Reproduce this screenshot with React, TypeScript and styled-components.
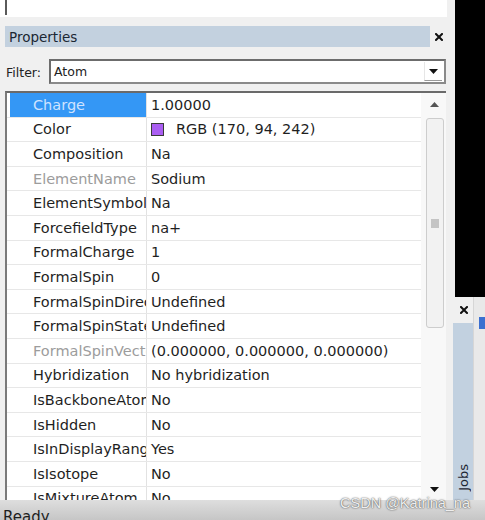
import React from "react";
import styled, { createGlobalStyle } from "styled-components";

const Global = createGlobalStyle`
  html, body { margin: 0; padding: 0; background: #f0f0f0; }
  body { font-family: "DejaVu Sans", Verdana, sans-serif; }
  * { box-sizing: border-box; }
`;

const Root = styled.div`
  position: relative;
  width: 485px;
  height: 520px;
  overflow: hidden;
  display: flex;
  flex-direction: column;
  background: #f0f0f0;
`;

const Main = styled.div`
  height: 500px;
  display: flex;
  flex-direction: row;
`;

const LeftPane = styled.div`
  width: 453px;
  display: flex;
  flex-direction: column;
`;

const TopWhite = styled.div`
  height: 17px;
  width: 447px;
  background: #ffffff;
  padding-left: 5px;
`;

const TopWhiteEdge = styled.div`
  width: 2px;
  height: 15px;
  background: #5a5a5a;
`;

const HeaderRow = styled.div`
  margin-top: 9px;
  margin-left: 5px;
  width: 443px;
  height: 21px;
  display: flex;
  align-items: center;
`;

const HeaderBar = styled.div`
  flex: 1;
  height: 100%;
  background: #c3d1df;
  display: flex;
  align-items: center;
  padding-left: 4px;
  font-size: 13.5px;
  color: #1b2733;
`;

const CloseBtn = styled.div`
  width: 18px;
  height: 100%;
  display: flex;
  align-items: center;
  justify-content: center;
`;

const FilterRow = styled.div`
  margin-top: 12px;
  height: 25px;
  display: flex;
  align-items: center;
  padding-left: 6px;
`;

const FilterLabel = styled.div`
  width: 43px;
  font-size: 12.5px;
  color: #222;
  padding-top: 2px;
`;

const Combo = styled.div`
  width: 397px;
  height: 25px;
  background: #fff;
  border-style: solid;
  border-width: 2px;
  border-color: #6c6c6c #8a8a8a #8a8a8a #6c6c6c;
  display: flex;
  align-items: center;
`;

const ComboText = styled.div`
  flex: 1;
  font-size: 12.5px;
  color: #222;
  padding-left: 3px;
`;

const ComboButton = styled.div`
  width: 18px;
  height: 19px;
  margin-right: 2px;
  display: flex;
  align-items: center;
  justify-content: center;
  border-bottom: 1px solid #9a9a9a;
  border-left: 1px solid #e6e6e6;
`;

const Grid = styled.div`
  margin-top: 7px;
  margin-left: 5px;
  width: 441px;
  height: 409px;
  border-top: 2px solid #6a6a6a;
  border-left: 2px solid #7a7a7a;
  background: #fff;
  display: flex;
  overflow: hidden;
`;

const RowsList = styled.div`
  flex: 1;
  display: flex;
  flex-direction: column;
`;

const Row = styled.div`
  flex: 0 0 24.6px;
  height: 24.6px;
  display: grid;
  grid-template-columns: 3px 136px 1px 1fr;
  border-bottom: 1px solid #e7e7e7;
  font-size: 14.5px;
`;

const Gutter = styled.div`
  background: #fff;
`;

const NameCell = styled.div<{ $selected?: boolean; $dim?: boolean }>`
  background: ${(p) => (p.$selected ? "#3497f5" : "#fff")};
  color: ${(p) => (p.$selected ? "#cfe3ff" : p.$dim ? "#9c9c9c" : "#1f1f1f")};
  padding-left: 23px;
  white-space: nowrap;
  overflow: hidden;
  display: flex;
  align-items: center;
`;

const Divider = styled.div`
  background: #e2e2e2;
`;

const ValueCell = styled.div`
  padding-left: 4px;
  color: #1f1f1f;
  white-space: nowrap;
  overflow: hidden;
  display: flex;
  align-items: center;
`;

const Swatch = styled.span<{ $color: string }>`
  width: 13px;
  height: 13px;
  background: ${(p) => p.$color};
  border: 1px solid #3a3a3a;
  margin-right: 12px;
  flex: 0 0 auto;
`;

const Scrollbar = styled.div`
  width: 25px;
  background: #f8f8f8;
  display: flex;
  flex-direction: column;
  align-items: center;
`;

const ScrollBtn = styled.div`
  height: 22px;
  width: 100%;
  display: flex;
  align-items: center;
  justify-content: center;
  padding-left: 2px;
`;

const Thumb = styled.div`
  margin-top: 3px;
  margin-left: 3px;
  width: 18px;
  height: 210px;
  border: 1px solid #cdcdcd;
  border-radius: 3px;
  background: #f2f2f2;
  display: flex;
  align-items: center;
  justify-content: center;
`;

const Grip = styled.div`
  width: 8px;
  height: 9px;
  background: #c4c4c4;
`;

const Spacer = styled.div`
  flex: 1;
`;

const RightStrip = styled.div`
  width: 32px;
  display: flex;
  flex-direction: column;
`;

const BlackBox = styled.div`
  height: 297px;
  margin-left: 2px;
  background: #000;
`;

const DockArea = styled.div`
  flex: 1;
  display: flex;
`;

const JobsCol = styled.div`
  width: 22px;
  display: flex;
  flex-direction: column;
`;

const DockClose = styled.div`
  height: 26px;
  display: flex;
  align-items: center;
  justify-content: center;
  padding-left: 1px;
`;

const JobsTab = styled.div`
  flex: 1;
  background: #c2d1e0;
  display: flex;
  flex-direction: column;
  justify-content: flex-end;
  align-items: center;
  padding-bottom: 9px;
`;

const JobsText = styled.div`
  writing-mode: vertical-rl;
  transform: rotate(180deg);
  font-size: 13px;
  color: #1d2733;
`;

const EdgePanel = styled.div`
  flex: 1;
  background: #e9e9e9;
  border-left: 1px solid #d6d6d6;
  padding-top: 20px;
  padding-left: 5px;
`;

const EdgeMark = styled.div`
  width: 6px;
  height: 12px;
  background: #3b6fd0;
`;

const StatusBar = styled.div`
  height: 20px;
  background: linear-gradient(#dedede, #c6c6c6);
  padding-left: 3px;
  padding-top: 8px;
  font-size: 15px;
  color: #1e1e1e;
  overflow: hidden;
  line-height: 18px;
`;

const Watermark = styled.div`
  position: absolute;
  right: 15px;
  bottom: 9px;
  font-family: "Liberation Sans", Arial, sans-serif;
  font-size: 14.5px;
  color: #eeeeee;
  text-shadow: 0 0 2px rgba(0, 0, 0, 0.5), 0 0 1px rgba(0, 0, 0, 0.5);
  white-space: nowrap;
`;

const XIcon = ({ size = 8 }: { size?: number }) => (
  <svg width={size} height={size} viewBox="0 0 8 8">
    <path d="M1 1L7 7M7 1L1 7" stroke="#111" strokeWidth="2" strokeLinecap="square" />
  </svg>
);

const Tri = ({ down }: { down?: boolean }) => (
  <svg width="9" height="5" viewBox="0 0 9 5">
    <path d={down ? "M0 0H9L4.5 5Z" : "M0 5H9L4.5 0Z"} fill={down ? "#111" : "#555"} />
  </svg>
);

type Prop = { name: string; value: string; selected?: boolean; dim?: boolean; swatch?: string };

const props: Prop[] = [
  { name: "Charge", value: "1.00000", selected: true },
  { name: "Color", value: "RGB (170, 94, 242)", swatch: "#aa5ef2" },
  { name: "Composition", value: "Na" },
  { name: "ElementName", value: "Sodium", dim: true },
  { name: "ElementSymbol", value: "Na" },
  { name: "ForcefieldType", value: "na+" },
  { name: "FormalCharge", value: "1" },
  { name: "FormalSpin", value: "0" },
  { name: "FormalSpinDirection", value: "Undefined" },
  { name: "FormalSpinState", value: "Undefined" },
  { name: "FormalSpinVector", value: "(0.000000, 0.000000, 0.000000)", dim: true },
  { name: "Hybridization", value: "No hybridization" },
  { name: "IsBackboneAtom", value: "No" },
  { name: "IsHidden", value: "No" },
  { name: "IsInDisplayRange", value: "Yes" },
  { name: "IsIsotope", value: "No" },
  { name: "IsMixtureAtom", value: "No" },
];

export default function App() {
  return (
    <Root>
      <Global />
      <Main>
        <LeftPane>
          <TopWhite>
            <TopWhiteEdge />
          </TopWhite>
          <HeaderRow>
            <HeaderBar>Properties</HeaderBar>
            <CloseBtn>
              <XIcon />
            </CloseBtn>
          </HeaderRow>
          <FilterRow>
            <FilterLabel>Filter:</FilterLabel>
            <Combo>
              <ComboText>Atom</ComboText>
              <ComboButton>
                <Tri down />
              </ComboButton>
            </Combo>
          </FilterRow>
          <Grid>
            <RowsList>
              {props.map((p) => (
                <Row key={p.name}>
                  <Gutter />
                  <NameCell $selected={p.selected} $dim={p.dim}>
                    {p.name}
                  </NameCell>
                  <Divider />
                  <ValueCell>
                    {p.swatch && <Swatch $color={p.swatch} />}
                    {p.value}
                  </ValueCell>
                </Row>
              ))}
            </RowsList>
            <Scrollbar>
              <ScrollBtn>
                <Tri />
              </ScrollBtn>
              <Thumb>
                <Grip />
              </Thumb>
              <Spacer />
              <ScrollBtn>
                <Tri down />
              </ScrollBtn>
            </Scrollbar>
          </Grid>
        </LeftPane>
        <RightStrip>
          <BlackBox />
          <DockArea>
            <JobsCol>
              <DockClose>
                <XIcon />
              </DockClose>
              <JobsTab>
                <JobsText>Jobs</JobsText>
              </JobsTab>
            </JobsCol>
            <EdgePanel>
              <EdgeMark />
            </EdgePanel>
          </DockArea>
        </RightStrip>
      </Main>
      <StatusBar>Ready</StatusBar>
      <Watermark>CSDN @Katrina_na</Watermark>
    </Root>
  );
}
